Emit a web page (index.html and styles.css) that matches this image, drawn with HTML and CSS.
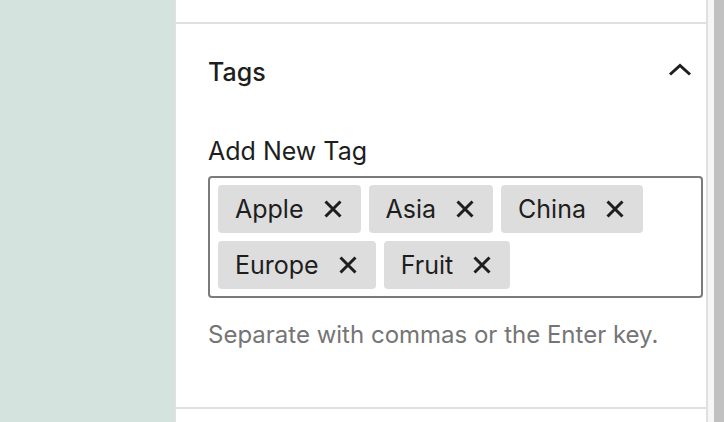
FILE: index.html
```html
<!DOCTYPE html>
<html lang="en">
<head>
<meta charset="utf-8">
<title>Tags</title>
<link rel="stylesheet" href="styles.css">
</head>
<body>
<div class="layout">
  <div class="side"></div>
  <div class="panel">
    <div class="panel-top"></div>
    <section class="tags-section">
      <div class="section-header">
        <h2 class="section-title">Tags</h2>
        <svg class="chevron" width="26" height="16" viewBox="0 0 26 16" aria-hidden="true"><polyline points="3,11.5 13,2.5 23,11.5" fill="none" stroke="#1e1e1e" stroke-width="3"/></svg>
      </div>
      <div class="section-body">
        <label class="field-label">Add New Tag</label>
        <div class="token-field">
          <span class="token"><span class="token-text">Apple</span><svg class="token-x" width="20" height="20" viewBox="0 0 20 20"><path d="M2.5 2.5L17.5 17.5M17.5 2.5L2.5 17.5" stroke="#1e1e1e" stroke-width="3"/></svg></span>
          <span class="token"><span class="token-text">Asia</span><svg class="token-x" width="20" height="20" viewBox="0 0 20 20"><path d="M2.5 2.5L17.5 17.5M17.5 2.5L2.5 17.5" stroke="#1e1e1e" stroke-width="3"/></svg></span>
          <span class="token"><span class="token-text">China</span><svg class="token-x" width="20" height="20" viewBox="0 0 20 20"><path d="M2.5 2.5L17.5 17.5M17.5 2.5L2.5 17.5" stroke="#1e1e1e" stroke-width="3"/></svg></span>
          <span class="token"><span class="token-text">Europe</span><svg class="token-x" width="20" height="20" viewBox="0 0 20 20"><path d="M2.5 2.5L17.5 17.5M17.5 2.5L2.5 17.5" stroke="#1e1e1e" stroke-width="3"/></svg></span>
          <span class="token"><span class="token-text">Fruit</span><svg class="token-x" width="20" height="20" viewBox="0 0 20 20"><path d="M2.5 2.5L17.5 17.5M17.5 2.5L2.5 17.5" stroke="#1e1e1e" stroke-width="3"/></svg></span>
        </div>
        <p class="help">Separate with commas or the Enter key.</p>
      </div>
    </section>
    <div class="panel-rest"></div>
  </div>
  <div class="gutter"></div>
  <div class="scrollbar"></div>
</div>
</body>
</html>
```
FILE: styles.css
```css
html, body {
  margin: 0;
  padding: 0;
  background: #ffffff;
}
body {
  font-family: Inter, "Liberation Sans", sans-serif;
  color: #1e1e1e;
}
.layout {
  display: flex;
  height: 422px;
  overflow: hidden;
}
.side {
  width: 175px;
  flex: none;
  background: #d5e3de;
}
.panel {
  width: 530px;
  flex: none;
  background: #ffffff;
  border-left: 1px solid #e2e2e2;
  border-right: 2px solid #e0e0e0;
  display: flex;
  flex-direction: column;
}
.panel-top {
  height: 22px;
  border-bottom: 2px solid #e0e0e0;
}
.tags-section {
  height: 383px;
  border-bottom: 2px solid #e0e0e0;
  padding: 0 0 0 32px;
}
.section-header {
  height: 96px;
  display: flex;
  align-items: center;
  justify-content: space-between;
  padding-right: 13px;
}
.section-title {
  margin: 0;
  font-size: 25px;
  font-weight: 500;
  line-height: 32px;
}
.chevron {
  display: block;
  margin-top: -2px;
}
.section-body {
  padding-right: 3px;
}
.field-label {
  display: block;
  font-size: 25px;
  line-height: 32px;
  margin-top: 15px;
  margin-bottom: 9px;
}
.token-field {
  border: 2px solid #7b7b7b;
  border-radius: 4px;
  padding: 7px 8px;
  display: flex;
  flex-wrap: wrap;
  gap: 8px;
  height: 104px;
  box-sizing: content-box;
  align-content: flex-start;
}
.token {
  height: 48px;
  background: #dddddd;
  border-radius: 4px;
  display: flex;
  align-items: center;
  padding: 0 18px 0 17px;
  font-size: 25px;
}
.token-text {
  line-height: 32px;
}
.token-x {
  display: block;
  margin-left: 19px;
}
.help {
  margin: 22px 0 0;
  font-size: 24px;
  line-height: 30px;
  color: #757575;
}
.panel-rest {
  flex: 1;
}
.gutter {
  width: 6px;
  flex: none;
  background: #f6f6f6;
}
.scrollbar {
  width: 10px;
  flex: none;
  background: #c1c1c1;
}
```
